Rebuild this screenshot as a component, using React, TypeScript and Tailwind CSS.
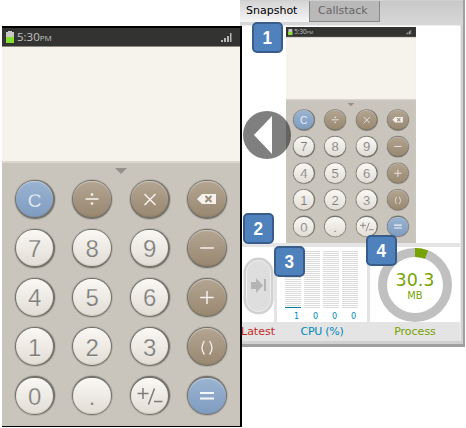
import React from "react";

type Kind = "blue" | "brown" | "white";

const KEYS: [string, Kind][] = [
  ["C", "blue"], ["div", "brown"], ["mul", "brown"], ["del", "brown"],
  ["7", "white"], ["8", "white"], ["9", "white"], ["sub", "brown"],
  ["4", "white"], ["5", "white"], ["6", "white"], ["add", "brown"],
  ["1", "white"], ["2", "white"], ["3", "white"], ["par", "brown"],
  ["0", "white"], [".", "white"], ["sign", "white"], ["eq", "blue"],
];

const FILL: Record<Kind, string> = {
  blue: "bg-gradient-to-b from-[#9ab3d2] to-[#7f9cc0] text-[#f4f7fa] text-[19px] [-webkit-text-stroke:0.3px_#8da8ca]",
  brown: "bg-gradient-to-b from-[#b3a592] to-[#998871] text-[#f5f2ee] text-[20px]",
  white: "bg-gradient-to-b from-[#faf8f4] to-[#e2ddd5] text-[#7d7c79] text-[24px] [-webkit-text-stroke:0.25px_#f5f3ef]",
};

const GLYPHS: Record<string, React.ReactNode> = {
  div: <><path d="M-6.5 0H6.5" /><circle cy="-4.5" r="1" fill="currentColor" strokeWidth=".8" /><circle cy="4.5" r="1" fill="currentColor" strokeWidth=".8" /></>,
  mul: <path d="M-5.5 -5L5.5 6M5.5 -5L-5.5 6" />,
  del: <><path d="M-10 0L-5 -5H9V5H-5Z" fill="currentColor" stroke="none" /><path d="M-1.5 -3L4.5 3M4.5 -3L-1.5 3" stroke="#9d8d78" strokeWidth="2" /></>,
  sub: <path d="M-6.8 0H6.8" />,
  add: <path d="M-6.8 .5H6.8M0 -6V7" />,
  par: <path d="M-2.6 -6Q-7.4 .8 -2.6 7.5M2.6 -6Q7.4 .8 2.6 7.5" strokeWidth="1.3" />,
  sign: <><path d="M-12.5 -2.5H-1.5M-7 -8V3M4.5 -7.5L-1.5 8.5" /><path d="M4 5.5H12.5" /></>,
  eq: <><path d="M-7 -3H7" strokeWidth="2" /><path d="M-7 2.5H7" strokeWidth="2" /></>,
};

function Key({ label, kind }: { label: string; kind: Kind }) {
  return (
    <div className="h-[41px] w-[42px] rounded-full bg-[#b3b0a8] p-px">
      <div className="h-full w-full rounded-full bg-[#75726b] p-[1.3px]">
        <div className={"flex h-full w-full items-center justify-center rounded-full font-['Liberation_Sans',sans-serif] leading-none shadow-[inset_0_1px_1px_rgba(255,255,255,.4),inset_0_-1px_1px_rgba(90,70,40,.12)] " + FILL[kind]}>
          {GLYPHS[label] ? (
            <svg className="h-[30px] w-[30px]" viewBox="-15 -15 30 30" fill="none" stroke="currentColor" strokeWidth="1.5">{GLYPHS[label]}</svg>
          ) : (
            <span className="pt-[2px]">{label}</span>
          )}
        </div>
      </div>
    </div>
  );
}

function Calculator() {
  return (
    <div className="flex h-[398px] w-[238px] flex-col bg-[#c9c5bc]">
      <div className="flex h-[19px] items-center border-b border-[#8d8a84] bg-[#333331] pr-[8px] pl-[4px] font-['Open_Sans',sans-serif] text-[#c4c4c2]">
        <svg className="h-[12px] w-[8px]" viewBox="0 0 8 12"><path d="M2 0H6V1H8V12H0V1H2Z" fill="#c8c8c6" /><path d="M0 6H8V12H0Z" fill="#86df2c" /></svg>
        <span className="pl-[3px] text-[11.5px] leading-none">5:30<span className="text-[8px]">PM</span></span>
        <svg className="ml-auto h-[9px] w-[11px]" viewBox="0 0 11 9" fill="#b5b5b3"><path d="M0 7H2V9H0ZM3 5H5V9H3ZM6 3H8V9H6ZM9 0H10.5V9H9Z" /></svg>
      </div>
      <div className="h-[114px] bg-[#f6f3ec]" />
      <div className="h-[2px] bg-[#dad7cf]" />
      <div className="flex h-[15.5px] justify-center pt-[5px]">
        <svg className="h-[6px] w-[12px]" viewBox="0 0 12 6"><path d="M0 0H12L6 6Z" fill="#96928b" /></svg>
      </div>
      <div className="grid grid-cols-[repeat(4,42px)] gap-x-[15.5px] gap-y-[8.2px] pl-[11.6px]">
        {KEYS.map(([label, kind]) => <Key key={label} label={label} kind={kind} />)}
      </div>
    </div>
  );
}

function Badge({ n, className }: { n: number; className: string }) {
  return (
    <div className={"absolute z-20 flex h-[31px] w-[31px] items-center justify-center rounded-[5px] border-2 border-[#385d8a] bg-[#4f81bd] font-['Liberation_Sans',sans-serif] text-[19px] font-bold leading-none text-white " + className}><span className="scale-x-90">{n}</span></div>
  );
}

function CpuBar({ value }: { value: number }) {
  return (
    <div className="w-[16px]">
      <div className="h-[57px] bg-[repeating-linear-gradient(to_bottom,#dadada_0_1px,#fff_1px_2px)]" />
      <div className={value > 0 ? "-mt-px h-px bg-[#0077aa]" : "-mt-px h-px bg-[#dcdcdc]"} />
      <div className="mt-[3px] pl-[7px] text-center font-['DejaVu_Sans_Condensed','DejaVu_Sans',sans-serif] text-[9px] leading-[10px] text-[#0088bb]">{value}</div>
    </div>
  );
}

export default function App() {
  return (
    <div className="relative flex h-[428px] w-[466px] items-start overflow-hidden bg-white font-['DejaVu_Sans',sans-serif]">
      <div className="relative z-10 mt-[26px] ml-[2px] w-[240px] shrink-0 border-t-2 border-r-2 border-b border-black">
        <Calculator />
      </div>
      <div className="-ml-[2px] flex h-[347px] w-[225px] shrink-0 flex-col border-r-2 border-b-[3px] border-[#a0a0a0] bg-[#d0d0d0] pt-px">
        <div className="flex h-[24px] items-start bg-gradient-to-b from-[#c8c8c8] to-[#d8d8d8] text-[11px]">
          <div className="h-[21px] w-[69px] bg-gradient-to-b from-[#d4d4d4] to-[#f6f6f6] pl-[6px] leading-[20px] text-black">Snapshot</div>
          <div className="h-[21px] w-[71px] border-r border-b border-l border-[#888] bg-[#b9b9b9] pl-[8px] leading-[20px] text-[#666]">Callstack</div>
        </div>
        <div className="ml-[2px] flex h-[316px] w-[219px] flex-col border-t border-r border-[#ececec] bg-[#e4e4e4]">
          <div className="relative h-[217px] bg-white pt-px pl-[44px]">
            <div className="h-[216px] w-[130px] overflow-hidden">
              <div className="h-[398px] w-[238px] origin-top-left scale-x-[.546] scale-y-[.5427]"><Calculator /></div>
            </div>
            <svg className="absolute top-[85px] left-px h-[48px] w-[48px]" viewBox="0 0 48 48"><circle cx="24" cy="24" r="24" fill="#000" opacity=".5" /><path d="M29 5V43L11 24Z" fill="#fff" /></svg>
          </div>
          <div className="mt-[4px] flex h-[75px] gap-[3px]">
            <div className="w-[32px] bg-white pt-[10px] pl-px">
              <svg className="h-[58px] w-[31px]" viewBox="0 0 31 58">
                <rect x=".5" y=".5" width="30" height="57" rx="15" fill="#d1d1d1" />
                <rect x="3.5" y="3.5" width="24" height="51" rx="12" fill="#dedede" stroke="#eee" />
                <path d="M8 25H13V21L20 28.5L13 36V32H8ZM21 22H23V34H21Z" fill="#b4b4b4" />
              </svg>
            </div>
            <div className="flex w-[90px] gap-[3px] bg-white pt-[4px] pl-[8px]">
              <CpuBar value={1} /><CpuBar value={0} /><CpuBar value={0} /><CpuBar value={0} />
            </div>
            <div className="relative flex w-[90px] flex-col items-center bg-white pt-[24px] text-[#77a300]">
              <svg className="absolute top-[1px] left-[8px] h-[74px] w-[74px] -rotate-90" viewBox="0 0 74 74" fill="none" strokeWidth="9">
                <circle cx="37" cy="37" r="32.5" stroke="#c0c0c0" />
                <circle cx="37" cy="37" r="32.5" stroke="#77a300" strokeDasharray="11.8 300" />
              </svg>
              <div className="text-[17.5px] leading-[19px]">30.3</div>
              <div className="font-['DejaVu_Sans_Condensed','DejaVu_Sans',sans-serif] text-[11px] leading-[12px]">MB</div>
            </div>
          </div>
          <div className="flex h-[19px] gap-[3px] text-center text-[11px] leading-[19px]">
            <div className="flex w-[32px] justify-center text-[#c42b2b]">Latest</div>
            <div className="w-[90px] tracking-[-0.3px] text-[#0088bb]">CPU (%)</div>
            <div className="w-[90px] text-[#77a300]">Process</div>
          </div>
        </div>
      </div>
      <Badge n={1} className="top-[22px] left-[252px]" />
      <Badge n={2} className="top-[213px] left-[243px]" />
      <Badge n={3} className="top-[246px] left-[274px]" />
      <Badge n={4} className="top-[235px] left-[366px]" />
    </div>
  );
}
